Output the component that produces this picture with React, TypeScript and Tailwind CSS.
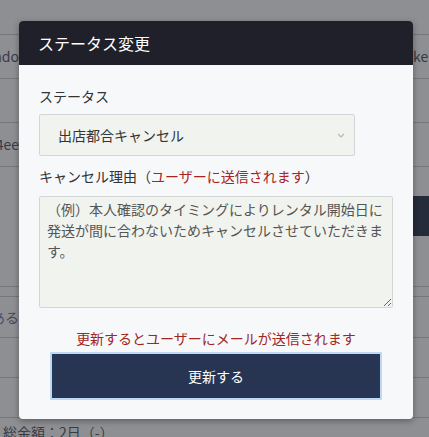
import React from "react";

const font = { fontFamily: '"Noto Sans CJK JP", "Noto Sans", sans-serif' };

function BgRow({ h, left, right, leftClass = "", rightClass = "", border = true }: { h: string; left?: string; right?: string; leftClass?: string; rightClass?: string; border?: boolean }) {
  return (
    <div className={`flex ${h} ${border ? "border-b border-[#75767b]" : ""}`}>
      <div className={`w-[19px] overflow-hidden flex items-center justify-end whitespace-nowrap text-[14px] ${leftClass}`}>{left}</div>
      <div className="flex-1" />
      <div className={`w-[16px] overflow-hidden flex items-center whitespace-nowrap text-[14px] ${rightClass}`}>{right}</div>
    </div>
  );
}

export default function App() {
  return (
    <div className="relative w-[429px] h-[437px] overflow-hidden bg-[#8e8f93] text-[#3a3b42]" style={font}>
      {/* background page (dimmed) */}
      <div className="flex flex-col">
        <BgRow h="h-[35px]" />
        <BgRow h="h-[44px]" left="Kando" right="kei" />
        <BgRow h="h-[44px]" />
        <BgRow h="h-[44px]" left="a84ee" />
        <div className="flex h-[120px] border-b border-[#75767b]">
          <div className="w-[19px]" />
          <div className="flex-1" />
          <div className="w-[16px] pt-[29px]">
            <div className="h-[40px] bg-[#252b3b]" />
          </div>
        </div>
        <BgRow h="h-[10px]" />
        <BgRow h="h-[41px]" left="がある" leftClass="text-[#45495e]" border={true} />
        <BgRow h="h-[40px]" />
        <BgRow h="h-[40px]" />
        <div className="pl-[3px] pt-[4px] text-[14px] whitespace-nowrap">総金額：2日（-）</div>
      </div>

      {/* modal */}
      <div className="absolute left-[19px] top-[21px] w-[394px] h-[398px] rounded-[4px] overflow-hidden bg-[#f7f8fa] shadow-[0_2px_6px_rgba(0,0,0,0.35)] flex flex-col">
        <div className="h-[44px] bg-[#1f2029] flex items-center px-[19px] text-white text-[16px]">ステータス変更</div>
        <div className="flex flex-col px-[20px] pt-[21px]">
          <div className="text-[14px] leading-[21px] text-[#333]">ステータス</div>
          <div className="mt-[7px] w-[316px] h-[42px] border border-[#d3d6d6] rounded-[2px] bg-[#f1f3ee] flex items-center pl-[18px] pr-[9px] text-[14px] text-[#333]">
            <span className="flex-1">出店都合キャンセル</span>
            <svg width="8" height="5" viewBox="0 0 8 5">
              <path d="M1 1 L4 4 L7 1" fill="none" stroke="#b5b7b8" strokeWidth="1.2" />
            </svg>
          </div>
          <div className="mt-[10px] text-[14px] leading-[21px] text-[#333]">
            キャンセル理由（<span className="text-[#a8241f]">ユーザーに送信されます</span>）
          </div>
          <textarea
            readOnly
            className="mt-[9px] w-[354px] h-[112px] border border-[#d3d6d6] rounded-[2px] bg-[#f1f3ee] px-[7px] py-[2px] text-[14px] leading-[21px] text-[#555] outline-none resize"
            style={font}
            value="（例）本人確認のタイミングによりレンタル開始日に発送が間に合わないためキャンセルさせていただきます。"
          />
          <div className="mt-[20px] text-center text-[14px] leading-[21px] text-[#a0261e]">更新するとユーザーにメールが送信されます</div>
          <div className="mt-[3px] flex justify-center">
            <button className="w-[332px] h-[48px] border-2 border-[#bcd9f5] bg-[#273553] text-white text-[14px]" style={font}>更新する</button>
          </div>
        </div>
      </div>
    </div>
  );
}
